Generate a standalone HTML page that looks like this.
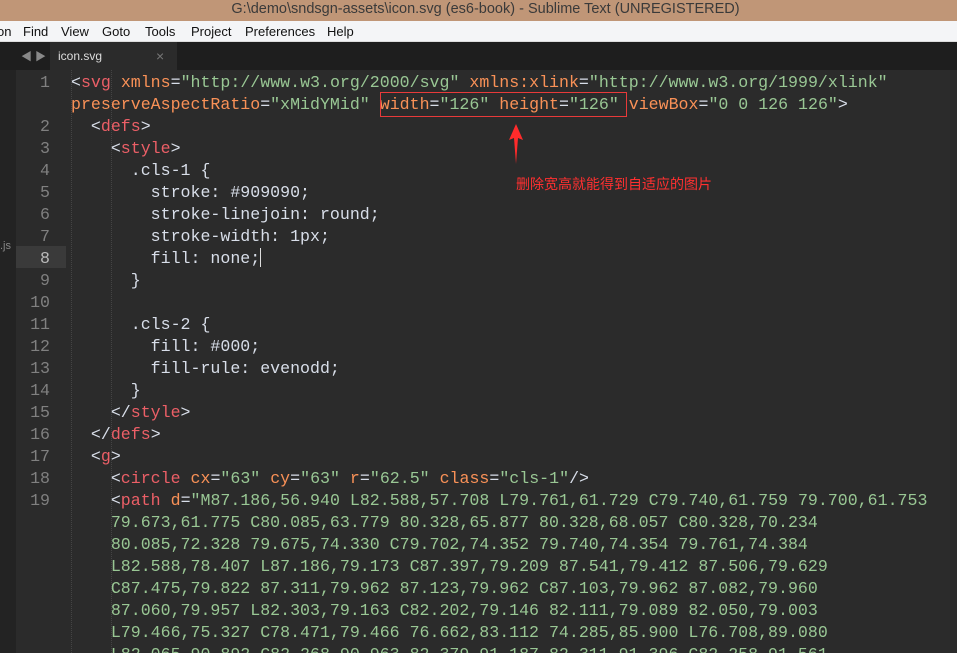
<!DOCTYPE html>
<html><head><meta charset="utf-8"><style>
*{margin:0;padding:0;box-sizing:border-box}
html,body{width:957px;height:653px;overflow:hidden}
body{background:#2b2b2b;position:relative;font-family:"Liberation Sans","Noto Sans CJK SC",sans-serif}
#title{position:absolute;left:0;top:0;width:957px;height:21px;background:#c09677;color:#3a3a3a;font-size:14.5px;line-height:19px;text-align:center;padding-left:14px}
#menu{position:absolute;left:0;top:21px;width:957px;height:21px;background:#f4f5f7;border-bottom:1px solid #ddd;font-size:13px;line-height:21px;color:#111}
#menu span{position:absolute;top:0}
#tabs{position:absolute;left:0;top:42px;width:957px;height:28px;background:#1e1e1e}
#tab{position:absolute;left:50px;top:0;width:127px;height:28px;background:#2b2b2b;color:#ddd;font-size:12px;line-height:28px;padding-left:8px}
#side{position:absolute;left:0;top:70px;width:16px;height:583px;background:#232323}
.hl{position:absolute;left:16px;top:246px;width:50px;height:22px;background:#3a3a3a}
.vl{position:absolute;top:70px;width:0;height:583px;border-left:1px dotted #444}
.n{position:absolute;left:16px;width:34px;margin-top:2px;text-align:right;font-family:"Liberation Mono",monospace;font-size:16.6px;line-height:22px;color:#808080}
.l{position:absolute;left:71px;margin-top:2px;white-space:pre;font-family:"Liberation Mono",monospace;font-size:16.6px;line-height:22px;color:#d8dee9}
.t{color:#ec5f67}.a{color:#f99157}.s{color:#99c794}
#box{position:absolute;left:380px;top:92px;width:247px;height:25px;border:1px solid #e83a3a}
#note{position:absolute;left:516px;top:174px;color:#ff3030;font-size:14px;font-family:"Noto Sans CJK SC",sans-serif}
.cur{display:inline-block;width:1px;height:19px;background:#ddd;vertical-align:-4px}
</style></head><body>
<div id="title">G:\demo\sndsgn-assets\icon.svg (es6-book) - Sublime Text (UNREGISTERED)</div>
<div id="menu"><span style="left:-3px">on</span><span style="left:23px">Find</span><span style="left:61px">View</span><span style="left:102px">Goto</span><span style="left:145px">Tools</span><span style="left:191px">Project</span><span style="left:245px">Preferences</span><span style="left:327px">Help</span></div>
<div id="tabs"><span style="position:absolute;left:21px;top:6px;color:#888;font-size:11px">◀ ▶</span><div id="tab">icon.svg<span style="position:absolute;left:106px;color:#777;font-size:14px">×</span></div></div>
<div id="side"><span style="position:absolute;left:0;top:170px;color:#888;font-size:11px">.js</span></div>
<div class="hl"></div>
<div class="vl" style="left:71px"></div>
<div class="vl" style="left:111px"></div>
<div class="n" style="top:70px">1</div><div class="n" style="top:114px">2</div><div class="n" style="top:136px">3</div><div class="n" style="top:158px">4</div><div class="n" style="top:180px">5</div><div class="n" style="top:202px">6</div><div class="n" style="top:224px">7</div><div class="n" style="top:246px;color:#bbb">8</div><div class="n" style="top:268px">9</div><div class="n" style="top:290px">10</div><div class="n" style="top:312px">11</div><div class="n" style="top:334px">12</div><div class="n" style="top:356px">13</div><div class="n" style="top:378px">14</div><div class="n" style="top:400px">15</div><div class="n" style="top:422px">16</div><div class="n" style="top:444px">17</div><div class="n" style="top:466px">18</div><div class="n" style="top:488px">19</div>
<div class="l" style="top:70px">&lt;<span class="t">svg</span> <span class="a">xmlns</span>=<span class="s">"http://www.w3.org/2000/svg"</span> <span class="a">xmlns:xlink</span>=<span class="s">"http://www.w3.org/1999/xlink"</span></div>
<div class="l" style="top:92px"><span class="a">preserveAspectRatio</span>=<span class="s">"xMidYMid"</span> <span class="a">width</span>=<span class="s">"126"</span> <span class="a">height</span>=<span class="s">"126"</span> <span class="a">viewBox</span>=<span class="s">"0 0 126 126"</span>&gt;</div>
<div class="l" style="top:114px">  &lt;<span class="t">defs</span>&gt;</div>
<div class="l" style="top:136px">    &lt;<span class="t">style</span>&gt;</div>
<div class="l" style="top:158px">      .cls-1 {</div>
<div class="l" style="top:180px">        stroke: #909090;</div>
<div class="l" style="top:202px">        stroke-linejoin: round;</div>
<div class="l" style="top:224px">        stroke-width: 1px;</div>
<div class="l" style="top:246px">        fill: none;<span class="cur"></span></div>
<div class="l" style="top:268px">      }</div>
<div class="l" style="top:312px">      .cls-2 {</div>
<div class="l" style="top:334px">        fill: #000;</div>
<div class="l" style="top:356px">        fill-rule: evenodd;</div>
<div class="l" style="top:378px">      }</div>
<div class="l" style="top:400px">    &lt;/<span class="t">style</span>&gt;</div>
<div class="l" style="top:422px">  &lt;/<span class="t">defs</span>&gt;</div>
<div class="l" style="top:444px">  &lt;<span class="t">g</span>&gt;</div>
<div class="l" style="top:466px">    &lt;<span class="t">circle</span> <span class="a">cx</span>=<span class="s">"63"</span> <span class="a">cy</span>=<span class="s">"63"</span> <span class="a">r</span>=<span class="s">"62.5"</span> <span class="a">class</span>=<span class="s">"cls-1"</span>/&gt;</div>
<div class="l" style="top:488px">    &lt;<span class="t">path</span> <span class="a">d</span>=<span class="s">"M87.186,56.940 L82.588,57.708 L79.761,61.729 C79.740,61.759 79.700,61.753</span></div>
<div class="l s" style="top:510px">    79.673,61.775 C80.085,63.779 80.328,65.877 80.328,68.057 C80.328,70.234</div>
<div class="l s" style="top:532px">    80.085,72.328 79.675,74.330 C79.702,74.352 79.740,74.354 79.761,74.384</div>
<div class="l s" style="top:554px">    L82.588,78.407 L87.186,79.173 C87.397,79.209 87.541,79.412 87.506,79.629</div>
<div class="l s" style="top:576px">    C87.475,79.822 87.311,79.962 87.123,79.962 C87.103,79.962 87.082,79.960</div>
<div class="l s" style="top:598px">    87.060,79.957 L82.303,79.163 C82.202,79.146 82.111,79.089 82.050,79.003</div>
<div class="l s" style="top:620px">    L79.466,75.327 C78.471,79.466 76.662,83.112 74.285,85.900 L76.708,89.080</div>
<div class="l s" style="top:642px">    L82.065,90.892 C82.268,90.963 82.379,91.187 82.311,91.396 C82.258,91.561</div>
<div id="box"></div>
<svg style="position:absolute;left:508px;top:124px" width="16" height="40"><polygon points="8,0 15,16 10,14 8,40 6,14 1,16" fill="#ff2b2b"/></svg>
<div id="note">删除宽高就能得到自适应的图片</div>
</body></html>
